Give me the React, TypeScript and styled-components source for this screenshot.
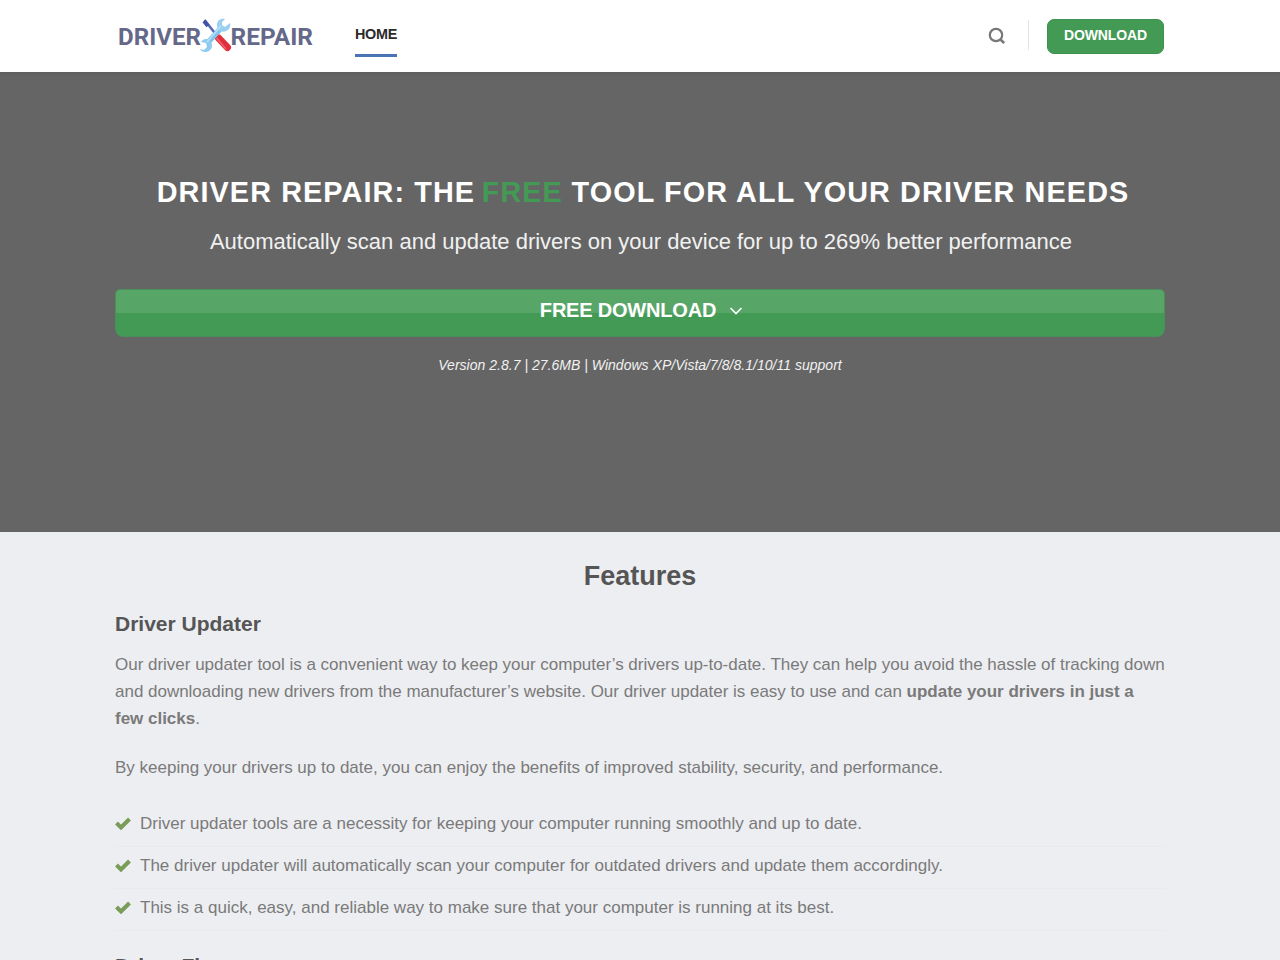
import React from "react";
import styled, { createGlobalStyle } from "styled-components";

const GlobalStyle = createGlobalStyle`
  * { box-sizing: border-box; }
  body {
    margin: 0;
    height: 960px;
    overflow: hidden;
    background: #edeef2;
    color: #7a7a7a;
    font-family: "Liberation Sans", Arial, sans-serif;
    font-size: 17px;
    line-height: 27px;
  }
  h1, h2, h3, p, ul { margin: 0; padding: 0; }
`;

const Header = styled.header`
  height: 72px;
  background: #fff;
  padding: 0 116px 0 115px;
  display: flex;
  align-items: center;
`;
const Logo = styled.svg`
  display: block;
  width: 200px;
  height: 44px;
`;
const NavLink = styled.a`
  margin: 13px 0 0 40px;
  height: 44px;
  padding-top: 11px;
  line-height: 20px;
  border-bottom: 3px solid #4a74b4;
  color: #2b2b2b;
  font-size: 14.4px;
  font-weight: 700;
  letter-spacing: -0.3px;
  align-self: flex-start;
`;
const Tools = styled.div`
  margin-left: auto;
  display: flex;
  align-items: center;
`;
const Divider = styled.i`
  width: 1px;
  height: 30px;
  margin: -2px 18px 0 22px;
  background: #e5e5e5;
`;
const SmallButton = styled.a`
  width: 117px;
  height: 35px;
  margin-top: 1px;
  border-radius: 7px;
  background: #439a55;
  border: 1px solid #3f9150;
  color: #fff;
  font-size: 14px;
  font-weight: 700;
  letter-spacing: -0.1px;
  line-height: 31px;
  text-align: center;
`;

const Hero = styled.section`
  height: 460px;
  padding: 100px 115px 0;
  background: linear-gradient(#5f5f5f, #656565 5px);
  color: #fff;
  text-align: center;
`;
const HeroTitle = styled.h1`
  padding-left: 6px;
  font-size: 28.8px;
  line-height: 40px;
  letter-spacing: 1.1px;
  white-space: nowrap;
`;
const Accent = styled.span`
  color: #439a55;
  margin: 0 -0.5px 0 -2.500px;
`;
const Lead = styled.p`
  margin-top: 12px;
  padding-left: 2px;
  font-size: 22px;
  line-height: 35px;
  color: #f1f1f1;
  white-space: nowrap;
`;
const BigButton = styled.a`
  display: flex;
  justify-content: center;
  margin-top: 30px;
  padding-left: 3px;
  height: 48px;
  border-radius: 5px 5px 8px 8px;
  border: 1px solid #499058;
  background: linear-gradient(#57a567 0 23px, #439a55 23px);
  color: #fff;
  font-size: 20px;
  font-weight: 700;
  letter-spacing: -0.2px;
  line-height: 41px;
`;
const Chevron = styled.svg`
  width: 14px;
  height: 10px;
  margin: 16px 0 0 13px;
`;
const Version = styled.p`
  margin-top: 15px;
  font-size: 14px;
  letter-spacing: 0.02px;
  font-style: italic;
  color: #f1f1f1;
`;

const Features = styled.section`
  padding: 24px 115px 0;
`;
const Title = styled.h2`
  text-align: center;
  font-size: 27px;
  line-height: 40px;
  color: #555;
`;
const Subtitle = styled.h3<{ $top?: number }>`
  margin: ${(p) => p.$top ?? 14}px 0 13px;
  font-size: 21px;
  line-height: 28px;
  color: #555;
`;
const Paragraph = styled.p<{ $spacing?: number }>`
  margin-bottom: 22px;
  letter-spacing: ${(p) => p.$spacing ?? 0}px;
  white-space: nowrap;
`;
const List = styled.ul`
  margin-top: 24px;
  list-style: none;
`;
const Item = styled.li`
  display: flex;
  align-items: center;
  height: 42px;
  padding-bottom: 4px;
  border-bottom: 1px solid #e9eaee;
  white-space: nowrap;
`;
const Check = styled.svg`
  width: 16px;
  height: 13px;
  margin-right: 9px;
`;

const items = [
  "Driver updater tools are a necessity for keeping your computer running smoothly and up to date.",
  "The driver updater will automatically scan your computer for outdated drivers and update them accordingly.",
  "This is a quick, easy, and reliable way to make sure that your computer is running at its best.",
];

function Brand() {
  return (
    <Logo viewBox="0 0 200 44" role="img" aria-label="Driver Repair">
      <g fill="#656889" fontFamily="Roboto, sans-serif" fontWeight="700" fontSize="24.500">
        <text x="3" y="31" textLength="83" lengthAdjust="spacingAndGlyphs">DRIVER</text>
        <text x="115.500" y="31" textLength="82.500" lengthAdjust="spacingAndGlyphs">REPAIR</text>
      </g>
      <path d="M89.500 6L103 23" stroke="#5767b3" strokeWidth="2.500" />
      <path d="M89 7l4 5" stroke="#3f52a8" strokeWidth="4" />
      <path d="M103.500 24L112.500 33.500" stroke="#df303e" strokeWidth="7" strokeLinecap="round" />
      <path d="M101.500 24L111 35" stroke="#f5646b" strokeWidth="1.500" />
      <path d="M92.500 29L107 13" stroke="#83c4ef" strokeWidth="5.500" />
      <path d="M110 5c-5-1-8 2-8 6 0 5 5 8 9 6 3-1 5-4 4-8l-5 4-3-2 0-3z" fill="#9bd0f3" />
      <path d="M86 28l5 1 1 4-3 3-4-1c1 3 6 4 9 2 4-3 4-8 0-11-3-2-6-1-8 2z" fill="#8fcaf0" />
      <path d="M92 28L106 12" stroke="#b8e1fa" strokeWidth="1.500" />
    </Logo>
  );
}

export default function App() {
  return (
    <>
      <GlobalStyle />
      <Header>
        <Brand />
        <NavLink>HOME</NavLink>
        <Tools>
          <svg width="18" height="18" viewBox="0 0 18 18" fill="none" stroke="#777" strokeWidth="2.200">
            <circle cx="8" cy="8" r="6.200" />
            <path d="M12 12l4.200 4.200" strokeWidth="2.600" />
          </svg>
          <Divider />
          <SmallButton>DOWNLOAD</SmallButton>
        </Tools>
      </Header>
      <Hero>
        <HeroTitle>
          DRIVER REPAIR: THE <Accent>FREE</Accent> TOOL FOR ALL YOUR DRIVER NEEDS
        </HeroTitle>
        <Lead>Automatically scan and update drivers on your device for up to 269% better performance</Lead>
        <BigButton>
          FREE DOWNLOAD
          <Chevron viewBox="0 0 14 10" fill="none" stroke="#fff" strokeWidth="1.700">
            <path d="M1.500 2l5.500 5.500 5.500-5.500" />
          </Chevron>
        </BigButton>
        <Version>Version 2.8.7 | 27.6MB | Windows XP/Vista/7/8/8.1/10/11 support</Version>
      </Hero>
      <Features>
        <Title>Features</Title>
        <Subtitle>Driver Updater</Subtitle>
        <Paragraph $spacing={-0.015}>
          Our driver updater tool is a convenient way to keep your computer’s drivers up-to-date. They can help you avoid the hassle of tracking down
          <br />
          and downloading new drivers from the manufacturer’s website. Our driver updater is easy to use and can <b>update your drivers in just a</b>
          <br />
          <b>few clicks</b>.
        </Paragraph>
        <Paragraph>
          By keeping your drivers up to date, you can enjoy the benefits of improved stability, security, and performance.
        </Paragraph>
        <List>
          {items.map((text) => (
            <Item key={text}>
              <Check viewBox="0 0 16 13" fill="none" stroke="#7a9c59" strokeWidth="4">
                <path d="M1.500 6l4.500 4.500L14.500 2" />
              </Check>
              {text}
            </Item>
          ))}
        </List>
        <Subtitle $top={21}>Driver Fixer</Subtitle>
      </Features>
    </>
  );
}
